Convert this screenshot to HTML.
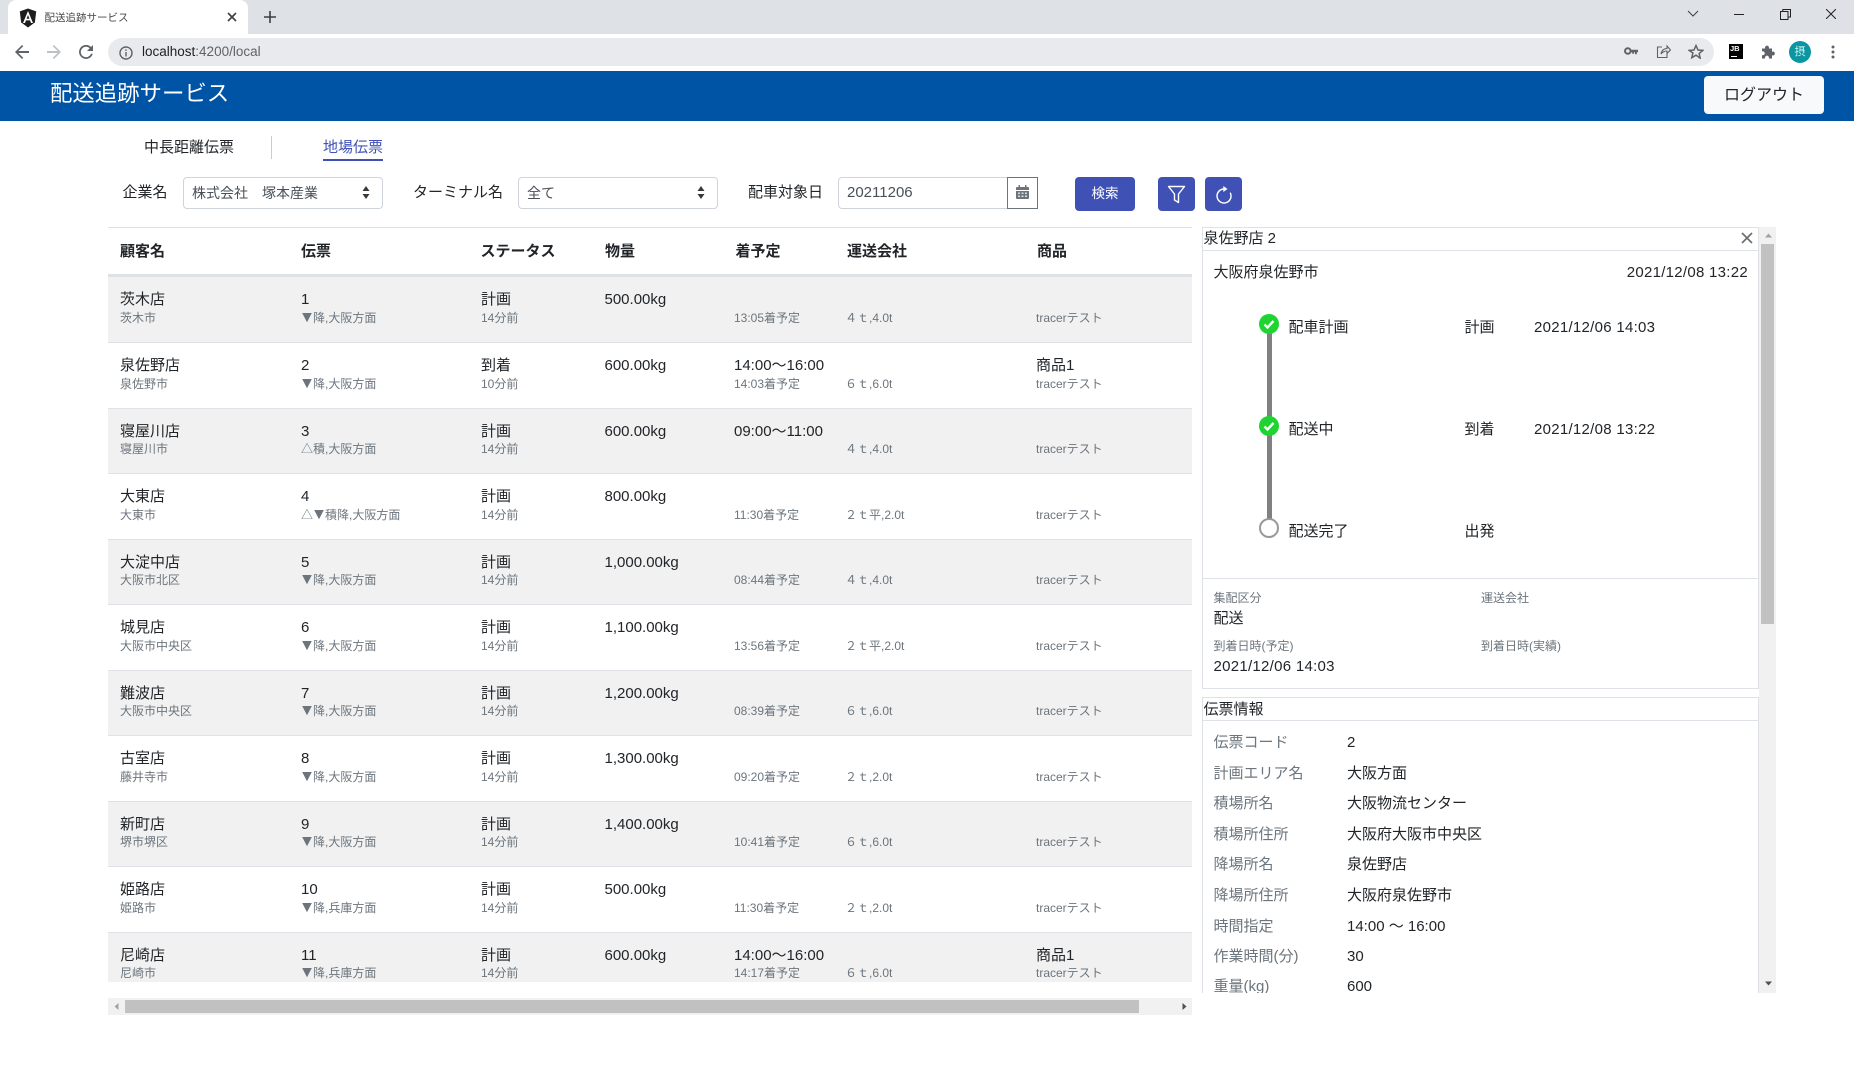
<!DOCTYPE html>
<html lang="ja"><head><meta charset="utf-8"><title>配送追跡サービス</title>
<style>
*{box-sizing:border-box}
html,body{margin:0;padding:0;width:1854px;height:1080px;overflow:hidden;background:#fff}
body{font-family:"Liberation Sans","Noto Sans CJK JP",sans-serif;color:#212529;position:relative;font-size:15px}
.a{position:absolute;white-space:nowrap}
.t{position:absolute;white-space:nowrap;line-height:20px;height:20px}
svg{position:absolute;display:block}
.box{position:absolute;border:1px solid #ced4da;border-radius:4px;background:#fff}
.btn{position:absolute;background:#3f51b5;border-radius:4px}
#list{position:absolute;left:108px;top:227px;width:1084px;height:755px;overflow:hidden;border-top:1px solid #dee2e6}
.hd{position:absolute;font-weight:700;top:14px;line-height:20px;white-space:nowrap}
.row{position:absolute;left:0;width:1084px;height:65.5px;border-top:1px solid #dee2e6}
.row.o{background:#f1f1f1}
.row>span{position:absolute;white-space:nowrap;line-height:18px}
.m{top:14.2px;font-size:15px}
.s{top:31.5px;font-size:12px;color:#6c757d}
.s i{font-style:normal;font-family:"IPAGothic","Noto Sans CJK JP",sans-serif;font-size:12px}
.c1{left:12px}.c2{left:193px}.c3{left:373px}.c4{left:496.5px}.c5{left:626px}.c6{left:737px}.c7{left:928px}
#detail{position:absolute;left:1202px;top:227px;width:574px;height:766px;overflow:hidden}
.lab{position:absolute;left:11.5px;color:#6c757d;white-space:nowrap;line-height:20px}
.val{position:absolute;left:145px;white-space:nowrap;line-height:20px}
.sm{position:absolute;font-size:12px;color:#6c757d;white-space:nowrap;line-height:16px}
.d{letter-spacing:.28px}
</style></head><body>

<!-- chrome -->
<div class="a" style="left:0;top:0;width:1854px;height:34px;background:#dee1e6"></div>
<div class="a" style="left:0;top:34px;width:1854px;height:37px;background:#fff"></div>
<div class="a" style="left:8px;top:0;width:240px;height:34px;background:#fff;border-radius:8px 8px 0 0"></div>
<svg style="left:19px;top:8px" width="18" height="20" viewBox="0 0 18 20"><path d="M9 0.5L0.8 3.4l1.3 11L9 19.5l6.900-5.100 1.300-11z" fill="#1d1d1f"/><path d="M9 3L4 15h2l1-2.600h4L12 15h2zM9 7l1.400 3.700H7.600z" fill="#fff"/></svg>
<div class="t" style="left:44.5px;top:8px;font-size:10.5px;color:#45494d">配送追跡サービス</div>
<svg style="left:227px;top:12px" width="10" height="10" viewBox="0 0 10 10"><path d="M1 1l8 8M9 1l-8 8" stroke="#3c4043" stroke-width="1.600"/></svg>
<svg style="left:264px;top:11px" width="12" height="12" viewBox="0 0 12 12"><path d="M6 0v12M0 6h12" stroke="#3c4043" stroke-width="1.600"/></svg>
<svg style="left:1687px;top:10px" width="12" height="8" viewBox="0 0 12 8"><path d="M1 1l5 5 5-5" fill="none" stroke="#3c4043" stroke-width="1"/></svg>
<div class="a" style="left:1734px;top:14px;width:10px;height:1px;background:#222"></div>
<svg style="left:1780px;top:9px" width="11" height="11" viewBox="0 0 11 11"><path d="M.5 2.500h7.500v8h-7.500zM2.800 2.500v-2h7.700v7.500h-2.500" fill="none" stroke="#222" stroke-width="1"/></svg>
<svg style="left:1826px;top:9px" width="10" height="10" viewBox="0 0 10 10"><path d="M0 0l10 10M10 0L0 10" stroke="#222" stroke-width="1"/></svg>

<svg style="left:15px;top:45px" width="14" height="14" viewBox="0 0 14 14"><path d="M14 6H3.400l4.900-4.900L7 0 0 7l7 7 1.300-1.100L3.400 8H14z" fill="#5f6368"/></svg>
<svg style="left:47px;top:45px" width="14" height="14" viewBox="0 0 14 14"><path d="M0 6h10.600L5.700 1.100 7 0l7 7-7 7-1.300-1.100L10.600 8H0z" fill="#bdc1c6"/></svg>
<svg style="left:79px;top:45px" width="14" height="14" viewBox="0 0 14 14"><path d="M12 2a7 7 0 1 0 1.800 6.800h-1.900A5.200 5.200 0 1 1 10.700 3.300L8 6h6V0z" fill="#5f6368"/></svg>
<div class="a" style="left:108px;top:38px;width:1606px;height:28px;background:#e8eaed;border-radius:14px"></div>
<svg style="left:119px;top:46px" width="14" height="14" viewBox="0 0 14 14"><circle cx="7" cy="7" r="6" fill="none" stroke="#5f6368" stroke-width="1.400"/><path d="M6.300 6h1.400v4.500H6.300zM6.300 3.400h1.400v1.500H6.300z" fill="#5f6368"/></svg>
<div class="t" style="left:142px;top:42px;font-size:13.5px;color:#5f6368"><span style="color:#202124">localhost</span>:4200/local</div>
<svg style="left:1624px;top:46px" width="14" height="10" viewBox="0 0 14 10"><circle cx="3.800" cy="5" r="2.800" fill="none" stroke="#5f6368" stroke-width="2"/><path d="M6 3.800h8v2.400h-1.200v2h-1.800v-2h-1v1.500H8.200V6.200H6z" fill="#5f6368"/></svg>
<svg style="left:1656px;top:44px" width="15" height="15" viewBox="0 0 15 15"><path d="M6 3H1.500v10.500H11V9.500M5 10c.5-3.500 3-5.500 6-5.500V2l3.500 4L11 9.500V7C8.500 7 6.500 8 5 10z" fill="none" stroke="#5f6368" stroke-width="1.100"/></svg>
<svg style="left:1688px;top:44px" width="16" height="15" viewBox="0 0 16 15"><path d="M8 1.500l2 4.500 4.800.4-3.700 3.100 1.100 4.700L8 11.200l-4.200 2.500 1.100-4.700L1.200 6.400 6 6z" fill="none" stroke="#5f6368" stroke-width="1.500"/></svg>
<div class="a" style="left:1729px;top:44px;width:14px;height:15px;background:#000"></div>
<div class="a" style="left:1730px;top:44px;font-size:7.5px;font-weight:700;color:#fff;line-height:9px">JB</div>
<div class="a" style="left:1731px;top:55.5px;width:6px;height:1px;background:#fff"></div>
<svg style="left:1761px;top:44px" width="15" height="15" viewBox="0 0 15 15"><path d="M1 4.500h3.200a2 2 0 1 1 3.600 0H11v3.200a2 2 0 1 1 0 3.600V14.500H7.800a2 2 0 1 0-3.600 0H1v-3.400a2 2 0 1 0 0-3.700z" fill="#5f6368"/></svg>
<div class="a" style="left:1789px;top:41px;width:22px;height:22px;border-radius:50%;background:#0a97a2"></div>
<div class="a" style="left:1794.5px;top:46px;font-size:11px;line-height:12px;color:#d6f0f2">摂</div>
<svg style="left:1831px;top:45px" width="4" height="14" viewBox="0 0 4 14"><circle cx="2" cy="2" r="1.500" fill="#5f6368"/><circle cx="2" cy="7" r="1.500" fill="#5f6368"/><circle cx="2" cy="12" r="1.500" fill="#5f6368"/></svg>

<!-- header -->
<div class="a" style="left:0;top:71px;width:1854px;height:50px;background:#0054a6"></div>
<div class="a" style="left:50px;top:79px;font-size:22.4px;line-height:30px;color:#fff">配送追跡サービス</div>
<div class="a" style="left:1704px;top:76px;width:120px;height:38px;background:#f8f9fa;border-radius:4px;text-align:center;line-height:39px;font-size:16px;color:#212529">ログアウト</div>

<!-- tabs -->
<div class="t" style="left:144px;top:137.5px;font-size:15px">中長距離伝票</div>
<div class="a" style="left:270.5px;top:136px;width:1px;height:23px;background:#ccc"></div>
<div class="t" style="left:323px;top:137.5px;font-size:15px;color:#3f51b5">地場伝票</div>
<div class="a" style="left:323px;top:159px;width:60px;height:2px;background:#3f51b5"></div>

<!-- filter -->
<div class="t" style="left:122.5px;top:183px">企業名</div>
<div class="box" style="left:183px;top:177px;width:200px;height:32px"></div>
<div class="t" style="left:192px;top:183px;font-size:14px;color:#495057">株式会社　塚本産業</div>
<svg style="left:362px;top:186px" width="8" height="13" viewBox="0 0 8 13"><path d="M4 0l3.500 5H.5zM4 13L.5 8h7z" fill="#343a40"/></svg>
<div class="t" style="left:413px;top:183px">ターミナル名</div>
<div class="box" style="left:518px;top:177px;width:200px;height:32px"></div>
<div class="t" style="left:527px;top:183px;font-size:14px;color:#495057">全て</div>
<svg style="left:697px;top:186px" width="8" height="13" viewBox="0 0 8 13"><path d="M4 0l3.500 5H.5zM4 13L.5 8h7z" fill="#343a40"/></svg>
<div class="t" style="left:748px;top:183px">配車対象日</div>
<div class="box" style="left:838px;top:177px;width:170px;height:32px;border-radius:4px 0 0 4px"></div>
<div class="t" style="left:847px;top:182.5px;font-size:15px;color:#495057">20211206</div>
<div class="a" style="left:1007px;top:177px;width:31px;height:32px;border:1px solid #6c757d;background:#fff"></div>
<svg style="left:1016px;top:185px" width="13" height="14" viewBox="0 0 13 14"><path d="M0 3a1 1 0 0 1 1-1h1.500V0h1.500v2h5V0h1.500v2H12a1 1 0 0 1 1 1v2H0z" fill="#6c757d"/><path d="M0 6h13v7a1 1 0 0 1-1 1H1a1 1 0 0 1-1-1z" fill="#6c757d"/><path d="M2 7.500h2v1.500H2zM5.500 7.500h2v1.500h-2zM9 7.500h2v1.500H9zM2 10.500h2V12H2zM5.500 10.500h2V12h-2zM9 10.500h2V12H9z" fill="#d8dade"/></svg>
<div class="btn" style="left:1075px;top:177px;width:60px;height:34px;text-align:center;color:#fff;font-size:13.5px;line-height:33px">検索</div>
<div class="btn" style="left:1158px;top:177px;width:37px;height:34px"></div>
<svg style="left:1167px;top:185px" width="19" height="19" viewBox="0 0 19 19"><path d="M1.500 1.500h16l-6 7.500v8.500l-4-2.500V9z" fill="none" stroke="#fff" stroke-width="1.400" stroke-linejoin="round"/></svg>
<div class="btn" style="left:1205px;top:177px;width:37px;height:34px"></div>
<svg style="left:1215px;top:185px" width="18" height="19" viewBox="0 0 18 19"><path d="M9 4A7 7 0 1 0 15.200 7.700" fill="none" stroke="#fff" stroke-width="1.400"/><path d="M8.300 1l4.200 3-4.200 3z" fill="#fff"/></svg>

<!-- list -->
<div id="list">
<div class="hd" style="left:12px">顧客名</div><div class="hd" style="left:193px">伝票</div><div class="hd" style="left:372.5px">ステータス</div><div class="hd" style="left:497px">物量</div><div class="hd" style="left:627.5px">着予定</div><div class="hd" style="left:739px">運送会社</div><div class="hd" style="left:929px">商品</div>
<div class="a" style="left:0;top:46px;width:1084px;height:3px;background:#dee2e6"></div>

<div class="row o" style="top:49px;border-top:0"><span class="m c1">茨木店</span><span class="s c1">茨木市</span><span class="m c2">1</span><span class="s c2"><i>▼</i>降,大阪方面</span><span class="m c3">計画</span><span class="s c3">14分前</span><span class="m c4">500.00kg</span><span class="s c5">13:05着予定</span><span class="s c6">４ｔ,4.0t</span><span class="s c7">tracerテスト</span></div>
<div class="row" style="top:114px"><span class="m c1">泉佐野店</span><span class="s c1">泉佐野市</span><span class="m c2">2</span><span class="s c2"><i>▼</i>降,大阪方面</span><span class="m c3">到着</span><span class="s c3">10分前</span><span class="m c4">600.00kg</span><span class="m c5">14:00～16:00</span><span class="s c5">14:03着予定</span><span class="s c6">６ｔ,6.0t</span><span class="m c7">商品1</span><span class="s c7">tracerテスト</span></div>
<div class="row o" style="top:179.5px"><span class="m c1">寝屋川店</span><span class="s c1">寝屋川市</span><span class="m c2">3</span><span class="s c2">△積,大阪方面</span><span class="m c3">計画</span><span class="s c3">14分前</span><span class="m c4">600.00kg</span><span class="m c5">09:00～11:00</span><span class="s c6">４ｔ,4.0t</span><span class="s c7">tracerテスト</span></div>
<div class="row" style="top:245px"><span class="m c1">大東店</span><span class="s c1">大東市</span><span class="m c2">4</span><span class="s c2">△<i>▼</i>積降,大阪方面</span><span class="m c3">計画</span><span class="s c3">14分前</span><span class="m c4">800.00kg</span><span class="s c5">11:30着予定</span><span class="s c6">２ｔ平,2.0t</span><span class="s c7">tracerテスト</span></div>
<div class="row o" style="top:310.5px"><span class="m c1">大淀中店</span><span class="s c1">大阪市北区</span><span class="m c2">5</span><span class="s c2"><i>▼</i>降,大阪方面</span><span class="m c3">計画</span><span class="s c3">14分前</span><span class="m c4">1,000.00kg</span><span class="s c5">08:44着予定</span><span class="s c6">４ｔ,4.0t</span><span class="s c7">tracerテスト</span></div>
<div class="row" style="top:376px"><span class="m c1">城見店</span><span class="s c1">大阪市中央区</span><span class="m c2">6</span><span class="s c2"><i>▼</i>降,大阪方面</span><span class="m c3">計画</span><span class="s c3">14分前</span><span class="m c4">1,100.00kg</span><span class="s c5">13:56着予定</span><span class="s c6">２ｔ平,2.0t</span><span class="s c7">tracerテスト</span></div>
<div class="row o" style="top:441.5px"><span class="m c1">難波店</span><span class="s c1">大阪市中央区</span><span class="m c2">7</span><span class="s c2"><i>▼</i>降,大阪方面</span><span class="m c3">計画</span><span class="s c3">14分前</span><span class="m c4">1,200.00kg</span><span class="s c5">08:39着予定</span><span class="s c6">６ｔ,6.0t</span><span class="s c7">tracerテスト</span></div>
<div class="row" style="top:507px"><span class="m c1">古室店</span><span class="s c1">藤井寺市</span><span class="m c2">8</span><span class="s c2"><i>▼</i>降,大阪方面</span><span class="m c3">計画</span><span class="s c3">14分前</span><span class="m c4">1,300.00kg</span><span class="s c5">09:20着予定</span><span class="s c6">２ｔ,2.0t</span><span class="s c7">tracerテスト</span></div>
<div class="row o" style="top:572.5px"><span class="m c1">新町店</span><span class="s c1">堺市堺区</span><span class="m c2">9</span><span class="s c2"><i>▼</i>降,大阪方面</span><span class="m c3">計画</span><span class="s c3">14分前</span><span class="m c4">1,400.00kg</span><span class="s c5">10:41着予定</span><span class="s c6">６ｔ,6.0t</span><span class="s c7">tracerテスト</span></div>
<div class="row" style="top:638px"><span class="m c1">姫路店</span><span class="s c1">姫路市</span><span class="m c2">10</span><span class="s c2"><i>▼</i>降,兵庫方面</span><span class="m c3">計画</span><span class="s c3">14分前</span><span class="m c4">500.00kg</span><span class="s c5">11:30着予定</span><span class="s c6">２ｔ,2.0t</span><span class="s c7">tracerテスト</span></div>
<div class="row o" style="top:703.5px"><span class="m c1">尼崎店</span><span class="s c1">尼崎市</span><span class="m c2">11</span><span class="s c2"><i>▼</i>降,兵庫方面</span><span class="m c3">計画</span><span class="s c3">14分前</span><span class="m c4">600.00kg</span><span class="m c5">14:00～16:00</span><span class="s c5">14:17着予定</span><span class="s c6">６ｔ,6.0t</span><span class="m c7">商品1</span><span class="s c7">tracerテスト</span></div>
</div>

<!-- horizontal scrollbar -->
<div class="a" style="left:108px;top:998px;width:1084px;height:17px;background:#f1f1f1"></div>
<div class="a" style="left:125px;top:1000px;width:1014px;height:13px;background:#c1c1c1"></div>
<svg style="left:114px;top:1003px" width="5" height="7" viewBox="0 0 5 7"><path d="M4.500 0v7L.5 3.500z" fill="#a3a3a3"/></svg>
<svg style="left:1182px;top:1003px" width="5" height="7" viewBox="0 0 5 7"><path d="M.5 0v7l4-3.500z" fill="#505050"/></svg>

<!-- detail -->
<div id="detail">
  <div class="a" style="left:0;top:0;width:557px;height:24px;border:1px solid #dee2e6"></div>
  <div class="t" style="left:1.5px;top:2px">泉佐野店 2</div>
  <svg style="left:539px;top:5px" width="12" height="12" viewBox="0 0 12 12"><path d="M1 1l10 10M11 1L1 11" stroke="#6e6e6e" stroke-width="1.700"/></svg>
  <div class="a" style="left:0;top:23px;width:557px;height:439px;border:1px solid #dee2e6;border-top:0"></div>
  <div class="a" style="left:0;top:351px;width:557px;height:1px;background:#dee2e6"></div>
  <div class="t" style="left:11.5px;top:36px">大阪府泉佐野市</div>
  <div class="t d" style="right:28px;top:36px">2021/12/08 13:22</div>

  <div class="a" style="left:64.5px;top:100px;width:5px;height:200px;background:#808080"></div>
  <svg style="left:57px;top:87px" width="20" height="20" viewBox="0 0 20 20"><circle cx="10" cy="10" r="10" fill="#1ed430"/><path d="M5.500 10.500l3 3 6-6.500" fill="none" stroke="#fff" stroke-width="2.400"/></svg>
  <svg style="left:57px;top:189px" width="20" height="20" viewBox="0 0 20 20"><circle cx="10" cy="10" r="10" fill="#1ed430"/><path d="M5.500 10.500l3 3 6-6.500" fill="none" stroke="#fff" stroke-width="2.400"/></svg>
  <div class="a" style="left:57px;top:291px;width:20px;height:20px;border-radius:50%;background:#fff;border:2px solid #999"></div>

  <div class="t" style="left:86.5px;top:90.5px">配車計画</div><div class="t" style="left:262.5px;top:90.5px">計画</div><div class="t d" style="left:332px;top:90.5px">2021/12/06 14:03</div>
  <div class="t" style="left:86.5px;top:193px">配送中</div><div class="t" style="left:262.5px;top:193px">到着</div><div class="t d" style="left:332px;top:193px">2021/12/08 13:22</div>
  <div class="t" style="left:86.5px;top:295px">配送完了</div><div class="t" style="left:262.5px;top:295px">出発</div>

  <div class="sm" style="left:11.5px;top:363px">集配区分</div><div class="sm" style="left:279px;top:363px">運送会社</div>
  <div class="t" style="left:11.5px;top:382px">配送</div>
  <div class="sm" style="left:11.5px;top:411px">到着日時(予定)</div><div class="sm" style="left:279px;top:411px">到着日時(実績)</div>
  <div class="t d" style="left:11.5px;top:430px">2021/12/06 14:03</div>

  <div class="a" style="left:0;top:470px;width:557px;height:300px;border:1px solid #dee2e6"></div>
  <div class="a" style="left:0;top:493px;width:557px;height:1px;background:#dee2e6"></div>
  <div class="t" style="left:1.5px;top:472.5px">伝票情報</div>

  <div class="lab" style="top:506px">伝票コード</div><div class="val" style="top:506px">2</div>
  <div class="lab" style="top:536.5px">計画エリア名</div><div class="val" style="top:536.5px">大阪方面</div>
  <div class="lab" style="top:567px">積場所名</div><div class="val" style="top:567px">大阪物流センター</div>
  <div class="lab" style="top:597.8px">積場所住所</div><div class="val" style="top:597.8px">大阪府大阪市中央区</div>
  <div class="lab" style="top:628.3px">降場所名</div><div class="val" style="top:628.3px">泉佐野店</div>
  <div class="lab" style="top:659px">降場所住所</div><div class="val" style="top:659px">大阪府泉佐野市</div>
  <div class="lab" style="top:689.5px">時間指定</div><div class="val" style="top:689.5px">14:00 ～ 16:00</div>
  <div class="lab" style="top:720px">作業時間(分)</div><div class="val" style="top:720px">30</div>
  <div class="lab" style="top:750px">重量(kg)</div><div class="val" style="top:750px">600</div>

  <div class="a" style="left:557px;top:0;width:17px;height:766px;background:#f1f1f1"></div>
  <div class="a" style="left:559px;top:17px;width:13px;height:380px;background:#c1c1c1"></div>
  <svg style="left:562.5px;top:6px" width="7" height="5" viewBox="0 0 7 5"><path d="M0 4.500h7L3.500.5z" fill="#a3a3a3"/></svg>
  <svg style="left:562.5px;top:754px" width="7" height="5" viewBox="0 0 7 5"><path d="M0 .5h7L3.500 4.500z" fill="#505050"/></svg>
</div>
</body></html>
